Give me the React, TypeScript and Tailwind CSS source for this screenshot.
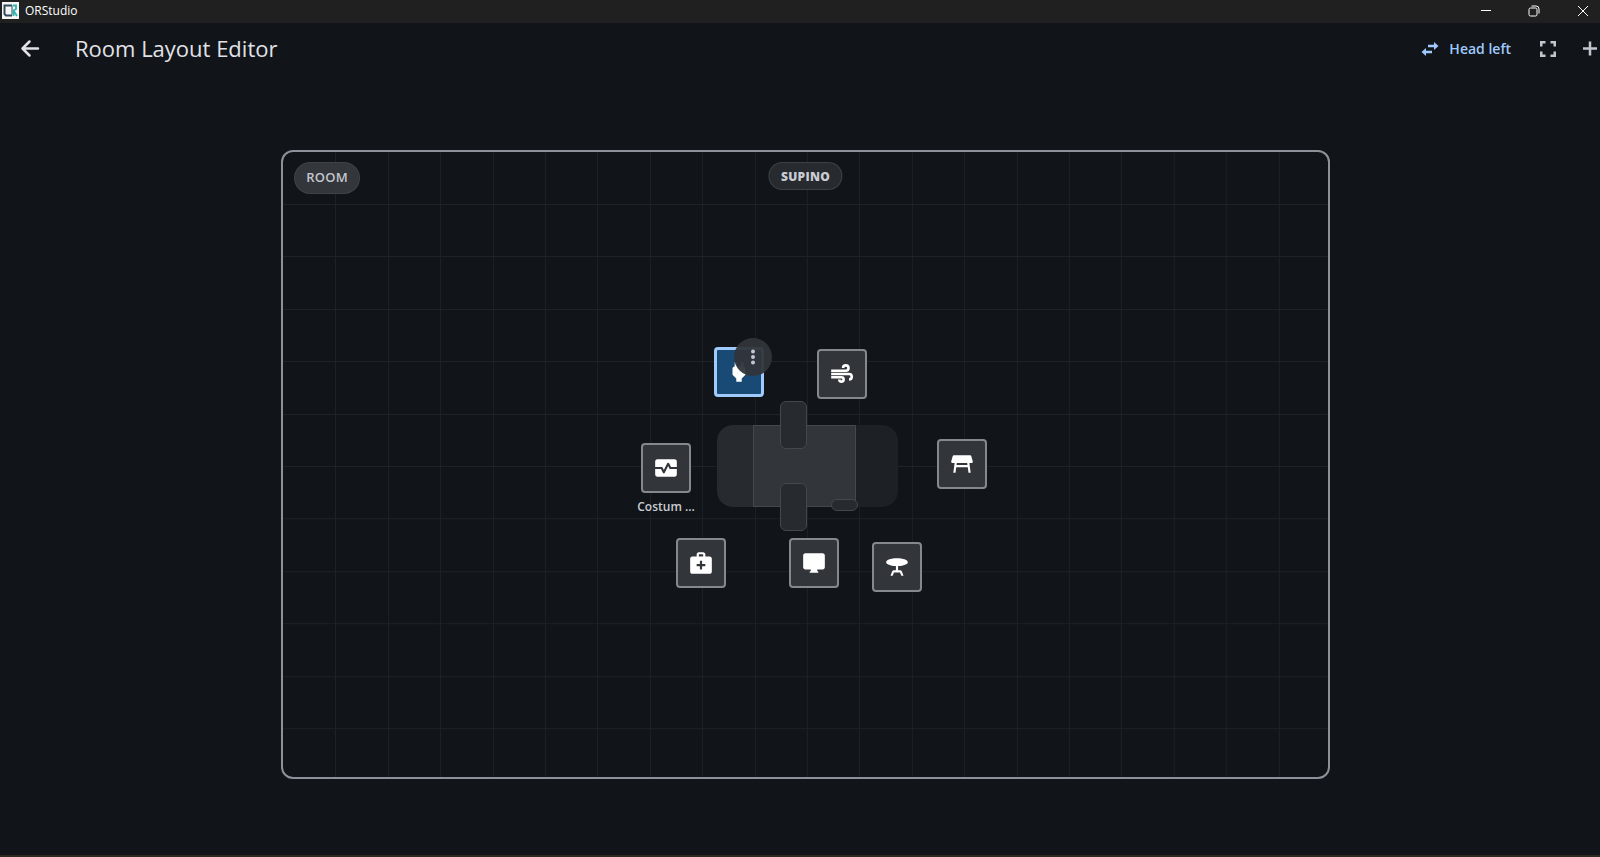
import React from 'react';
import { MdMedicalServices, MdMonitorHeart, MdPower, MdTableBar, MdTableRestaurant } from 'react-icons/md';

// inner size of the room, node coordinates are in the same unit
const ROOM_W = 1045;
const ROOM_H = 625;

const place = (x: number, y: number) => ({
    left: `${(x / ROOM_W) * 100}%`,
    top: `${(y / ROOM_H) * 100}%`,
});

const box = (x: number, y: number, w: number, h: number) => ({
    ...place(x, y),
    width: `${(w / ROOM_W) * 100}%`,
    height: `${(h / ROOM_H) * 100}%`,
});

const MonitorIcon = () => (
    <svg viewBox="0 0 24 24" className="size-[26px]" fill="currentColor">
        <path d="M20 3H4c-1.1 0-2 .9-2 2v11c0 1.1.9 2 2 2h5v1.5H8.5c-.3 0-.5.2-.5.5v.5c0 .3.2.5.5.5h7c.3 0 .5-.2.5-.5V20c0-.3-.2-.5-.5-.5H15V18h5c1.1 0 2-.9 2-2V5c0-1.1-.9-2-2-2z" />
    </svg>
);

const AirIcon = () => (
    <svg viewBox="0 0 24 24" className="size-[26px]" fill="none" stroke="currentColor" strokeWidth="2.400">
        <path d="M2 9h13.500a2.500 2.500 0 1 0-2.500-2.500M2 12h16.500a2.500 2.500 0 0 1 0 5M2 15h9.500a2 2 0 1 1-2 2" />
    </svg>
);

interface Item {
    name: string;
    x: number;
    y: number;
    icon: React.ReactNode;
    label?: string;
    selected?: boolean;
}

const items: Item[] = [
    { name: 'Power', x: 431, y: 195, icon: <MdPower className="size-[26px]" />, selected: true },
    { name: 'Ventilation', x: 534, y: 197, icon: <AirIcon /> },
    { name: 'Monitor', x: 358, y: 291, icon: <MdMonitorHeart className="size-[26px]" />, label: 'Costum ...' },
    { name: 'Instrument table', x: 654, y: 287, icon: <MdTableRestaurant className="size-[26px]" /> },
    { name: 'Medical kit', x: 393, y: 386, icon: <MdMedicalServices className="size-[26px]" /> },
    { name: 'Screen', x: 506, y: 386, icon: <MonitorIcon /> },
    { name: 'Round table', x: 589, y: 390, icon: <MdTableBar className="size-[26px]" /> },
];

const TitleBar = () => (
    <div className="flex h-[23px] items-center justify-between overflow-hidden bg-[#202020] text-white">
        <div className="flex h-[21px] items-center gap-1.5 self-start pl-0.5">
            <svg viewBox="0 0 17 17" className="size-[17px]" fill="none">
                <rect width="17" height="17" fill="#f4f6f7" />
                <path d="M10 3.5H2.5V12l1.5 1.5h6" stroke="#34495e" strokeWidth="2" />
                <path d="M10 3.5v9" stroke="#34495e" strokeWidth="1" />
                <path d="M11 3.500h3v3.500l-2.500 1.500L15 14M11.500 9v5" stroke="#2fb5ac" strokeWidth="1.800" />
            </svg>
            <span className="text-xs">ORStudio</span>
        </div>
        <div className="-mr-2 flex h-[21px] items-center self-start">
            <button aria-label="Minimize" className="flex h-full w-12 items-center justify-center">
                <svg viewBox="0 0 12 12" className="size-3" stroke="currentColor"><path d="M1 5.500h10" /></svg>
            </button>
            <button aria-label="Restore" className="flex h-full w-12 items-center justify-center">
                <svg viewBox="0 0 12 12" className="size-3" stroke="currentColor" fill="none">
                    <rect x="1" y="3" width="8" height="8" rx="1.500" />
                    <path d="M3.500 1h4.500a3 3 0 0 1 3 3v4.500" />
                </svg>
            </button>
            <button aria-label="Close" className="flex h-full w-[50px] items-center justify-center">
                <svg viewBox="0 0 12 12" className="size-3" stroke="currentColor"><path d="M1 1l10 10M11 1L1 11" /></svg>
            </button>
        </div>
    </div>
);

const AppBar = () => (
    <header className="flex h-[51px] items-center overflow-hidden text-[#e1e2e8]">
        <button aria-label="Back" className="ml-[18px] flex size-6 items-center justify-center">
            <svg viewBox="0 0 24 24" className="size-6" fill="none" stroke="currentColor" strokeWidth="2.500" strokeLinecap="round" strokeLinejoin="round">
                <path d="M20 11.500H5M11.500 4.500l-7 7 7 7" />
            </svg>
        </button>
        <h1 className="ml-[33px] flex-1 text-[22px]">Room Layout Editor</h1>
        <button className="flex items-center gap-2.5 text-sm font-semibold text-[#a0cafd]">
            <svg viewBox="0 0 18 18" className="size-[18px]" fill="none" stroke="currentColor" strokeWidth="2.500">
                <path d="M7 6h7M4 12h7" />
                <path d="M13 2L17.500 6 13 10zM5 8L.5 12 5 16z" fill="currentColor" stroke="none" />
            </svg>
            Head left
        </button>
        <button aria-label="Fullscreen" className="ml-[25px] flex size-6 items-center justify-center text-[#c3c6cf]">
            <svg viewBox="0 0 16 16" className="size-4" fill="none" stroke="currentColor" strokeWidth="2.500">
                <path d="M1.250 5.500V1.250H5.500M10.500 1.250h4.250V5.500M14.750 10.500v4.250H10.500M5.500 14.750H1.250V10.500" />
            </svg>
        </button>
        <button aria-label="Add" className="mr-[-2px] ml-[18px] flex size-6 items-center justify-center text-[#c3c6cf]">
            <svg viewBox="0 0 24 24" className="size-6" stroke="currentColor" strokeWidth="2.500">
                <path d="M5 11.500h14M12 4.500v14" />
            </svg>
        </button>
    </header>
);

// operating table, seen from above
const OperatingTable = () => (
    <>
        <div style={box(434, 273, 37, 82)} className="absolute rounded-l-2xl bg-[#272a2f]"></div>
        <div style={box(572, 273, 43, 82)} className="absolute rounded-r-2xl bg-[#1d2024]"></div>
        <div style={box(470, 273, 103, 82)} className="absolute border border-[#43474e] bg-[#32353a]"></div>
        <div style={box(497, 249, 27, 48)} className="absolute rounded-md border border-[#43474e] bg-[#272a2f]"></div>
        <div style={box(497, 331, 27, 48)} className="absolute rounded-md border border-[#43474e] bg-[#272a2f]"></div>
        <div style={box(548, 347, 27, 12)} className="absolute rounded-full border border-[#43474e] bg-[#272a2f]"></div>
    </>
);

const RoomItem = ({ item }: { item: Item }) => (
    <div style={place(item.x, item.y)} className="absolute size-[50px]">
        <button
            aria-label={item.name}
            className={item.selected
                ? 'flex size-full items-center justify-center rounded-sm border-3 border-[#a0cafd] bg-[#194975] text-white'
                : 'flex size-full items-center justify-center rounded-sm border-2 border-[#84888f] bg-[#32353a] text-white'}
        >
            {item.icon}
        </button>
        {item.label && <div className="-mx-3 mt-1.5 text-center text-xs font-semibold text-[#c9ccd3]">{item.label}</div>}
        {item.selected && (
            <button aria-label="Item menu" className="absolute -top-[9px] left-5 flex size-[38px] items-center justify-center rounded-full bg-[#32353a]/95 text-[#c3c6cf]">
                <svg viewBox="0 0 16 16" className="size-4" fill="currentColor">
                    <circle cx="8" cy="2.500" r="2" />
                    <circle cx="8" cy="8" r="2" />
                    <circle cx="8" cy="13.500" r="2" />
                </svg>
            </button>
        )}
    </div>
);

const Room = () => (
    <div className="relative aspect-[5/3] w-[66%] rounded-xl border-2 border-[#8d9199]">
        <svg className="absolute inset-0 size-full" viewBox="0 0 1045 625" preserveAspectRatio="none" stroke="#1f2226" strokeWidth="1">
            {Array.from({ length: 19 }, (_, i) => (
                <line key={`v${i}`} x1={Math.round((i + 1) * 52.4) + 0.5} x2={Math.round((i + 1) * 52.4) + 0.5} y1="0" y2="625" />
            ))}
            {Array.from({ length: 11 }, (_, i) => (
                <line key={`h${i}`} x1="0" x2="1045" y1={Math.floor((i + 1) * 52.4) + 0.5} y2={Math.floor((i + 1) * 52.4) + 0.5} />
            ))}
        </svg>
        <div className="absolute top-2.5 left-[11px] flex h-8 items-center rounded-full border border-[#43474e]/80 bg-[#3c3f44]/80 px-[11px] text-[13px] font-semibold tracking-wide text-[#c3c6cf]">ROOM</div>
        <div className="absolute top-2.5 left-1/2 flex h-7 -translate-x-1/2 items-center rounded-full border border-[#43474e]/80 bg-[#2b2e33]/85 px-[11px] pt-0.5 text-xs font-extrabold tracking-wide text-[#c9ccd3]">SUPINO</div>
        <OperatingTable />
        {items.map((item) => <RoomItem key={item.name} item={item} />)}
    </div>
);

const App = () => {
    return (
        <div className="flex min-h-screen flex-col border-b-2 border-[#2f2a22] bg-[#111418] font-['Open_Sans','Noto_Sans',sans-serif]">
            <TitleBar />
            <AppBar />
            <main className="flex flex-1 items-center justify-center pl-[11px]">
                <Room />
            </main>
        </div>
    );
};

export default App;
